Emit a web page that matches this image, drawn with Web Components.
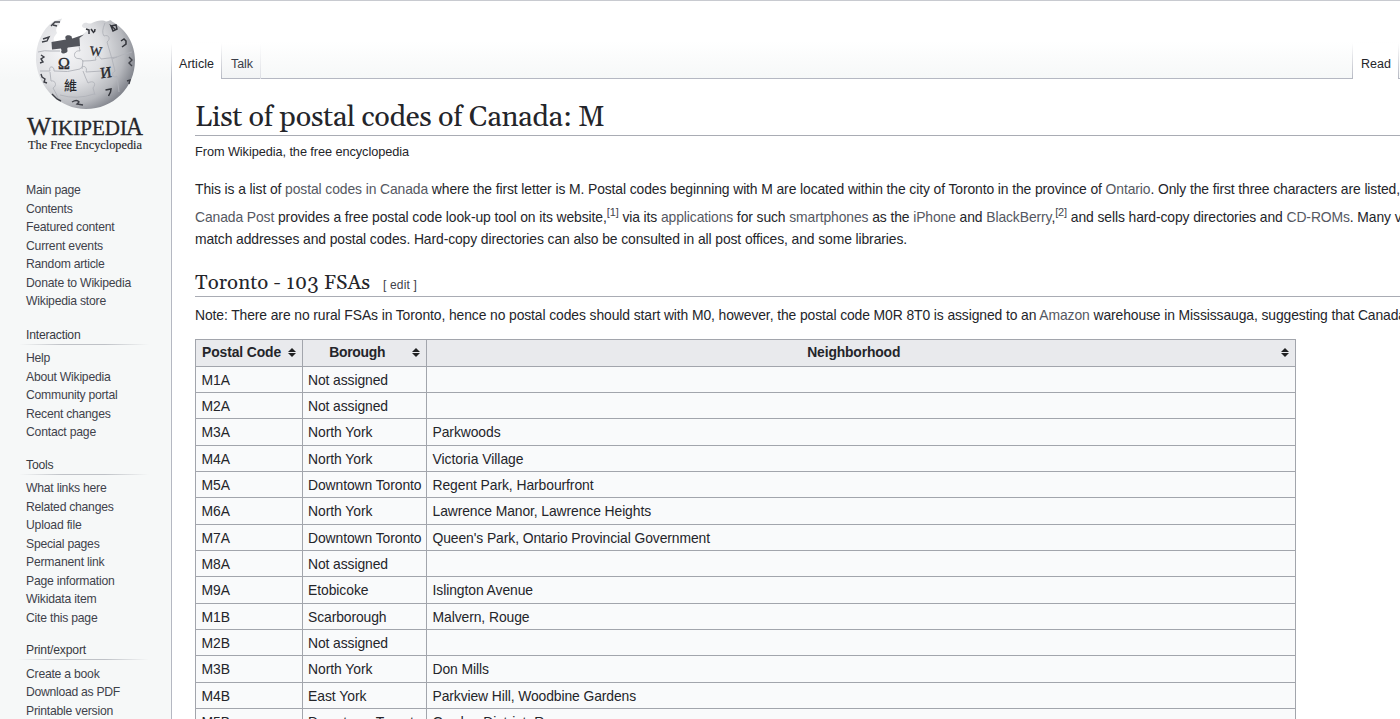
<!DOCTYPE html>
<html lang="en"><head><meta charset="utf-8"><title>List of postal codes of Canada: M</title>
<style>html,body{margin:0;height:719px;overflow:hidden;background:#fff}body{font-family:"Liberation Sans",Arial,sans-serif;color:#24252a}</style></head>
<body><wiki-page></wiki-page>
<script>
// One line of text, tracked so that it spans the width given by its "w" attribute.
customElements.define('text-line',class extends HTMLElement{
 connectedCallback(){
  this.attachShadow({mode:'open'}).innerHTML='<style>:host{display:inline-block;white-space:nowrap}</style><slot></slot>';
  const w=parseFloat(this.getAttribute('w'));
  if(w){const n=this.textContent.length,r=this.getBoundingClientRect().width;this.style.letterSpacing=((w-r)/n)+'px'}
 }});

customElements.define('wiki-logo',class extends HTMLElement{
 connectedCallback(){this.attachShadow({mode:'open'}).innerHTML=`
<style>:host{display:block;width:171px;height:160px}svg{display:block}text{font-family:"Liberation Serif",serif;fill:#26272b}</style>
<svg width="171" height="160" viewBox="0 0 171 160">
<defs><radialGradient id="g" cx=".3" cy=".36" r=".74"><stop offset="0" stop-color="#f6f6f8"/><stop offset=".5" stop-color="#dfe0e3"/><stop offset=".8" stop-color="#b6b8bd"/><stop offset="1" stop-color="#7f828a"/></radialGradient></defs>
<path d="M62 17.500L54 20C42 28 35.500 43 36 60C38 87 60 108 86 108C113 108 135 87 135 59C135 43 126 28 112 20.500C110 17 108 22 105 20C100 19 96 20 92 22C89 24 86 20 83 23C80 25 84 28 86 27L87 30L82 34L70 39L55 42C52 37 55 35 57 32C55 28 57 26 59 24Z" fill="url(#g)"/>
<path d="M51.500 41L66 38.500C64 35 67 33.500 70 34.500C73 35.500 71 37 72.500 37.500L84 33.500L79.500 37L80 45L68 46.500C66 48 69 50 66.500 51.500C63 53.500 60 52 61.500 49.500L61 47.500L52 48.500Z" fill="#53555c"/>
<g fill="none" stroke="#b0b2b9" stroke-width=".9"><path d="M38 51Q45 49 50 50L60 50M79 45L80 50C77 49 73 52 75 56C77 59 81 56 83 60L82 68M82 60Q91 60 96 59C94 55 99 53 101 58L117 56M40 70L50 70C48 64 55 65 54 70Q68 72 80 68C83 63 88 66 86 71L102 70M50 71L51 80C56 79 57 85 53 87Q56 92 58 97M83 70Q86 78 88 82C93 79 97 82 93 87L95 94M60 94Q77 99 94 93M105 22Q101 31 104 35C109 33 111 38 107 41L112 58L115 70C110 73 114 78 117 75L119 91M112 58Q123 53 132 51"/></g>
<g font-weight="bold"><text x="58" y="68" font-size="16" font-weight="400" stroke="#26272b" stroke-width=".4">Ω</text><text x="89.500" y="54" font-size="13" transform="rotate(5 89 54)" font-weight="400" stroke="#26272b" stroke-width=".3">W</text><text x="101" y="77.500" font-size="15.500" transform="rotate(-7 100 77)" font-weight="400" stroke="#26272b" stroke-width=".4">И</text><text x="64" y="89" font-size="13" style="font-family:'Noto Sans CJK SC',sans-serif;font-weight:500">維</text></g>
<g fill="none" stroke="#33353b" stroke-width="1.500"><path d="M105.500 89L111 88L110.500 91L108.500 95M86 28L89 29L89 33M91 28L94 32M95 28L94.500 31M121 40L124 38L126 40L126 43L122 46M111 25L116 24L117 28L113 30L111 25L115 28"/></g>
<g fill="none" stroke="#3e4047" stroke-width="1.400"><path d="M51 25L55 21L60 21M53 24L57 25M43 38L49 36L47 40L42 41M41 54L44 56L41 58L43 61L40 62M41 73L42 76L45 78L44 81L47 82M72 101Q77 98 79 101L77 103L83 104M129 56L132 59L129 62L132 65M127 80L130 79L129 83M52 93L57 98L61 100"/></g>
<g stroke="#26272b" stroke-width=".3"><text x="27" y="133.500" font-size="25" textLength="24" lengthAdjust="spacingAndGlyphs">W</text><text x="51" y="133.500" font-size="20" textLength="76" lengthAdjust="spacingAndGlyphs">IKIPEDI</text><text x="126" y="133.500" font-size="25" textLength="17" lengthAdjust="spacingAndGlyphs">A</text></g><text x="28" y="147.500" font-size="13.500" textLength="114" lengthAdjust="spacingAndGlyphs" stroke="#26272b" stroke-width=".15">The Free Encyclopedia</text>
</svg>`}});

customElements.define('side-portal',class extends HTMLElement{
 connectedCallback(){const h=this.getAttribute('heading');this.attachShadow({mode:'open'}).innerHTML=`
<style>:host{display:block;padding:0 0 13.900px 26px;font-size:12.200px;color:#3f424b}
h3{font:inherit;color:#383a42;margin:0;height:18px;line-height:18px}
.rule{height:1px;width:130px;margin:0 0 4.300px -7px;background:linear-gradient(90deg,transparent,#bfc2c7 33%,#bfc2c7 66%,transparent)}
div.i{height:18.560px;line-height:18.560px}</style>
${h?`<h3><text-line w="${this.getAttribute('w')}">${h}</text-line></h3><div class="rule"></div>`:''}${this.getAttribute('items').split('|').map(s=>{const[t,w]=s.split('~');return`<div class="i"><text-line w="${w}">${t}</text-line></div>`}).join('')}`}});

customElements.define('wiki-sidebar',class extends HTMLElement{
 connectedCallback(){this.attachShadow({mode:'open'}).innerHTML=`
<style>:host{display:block;width:171px;flex:none}wiki-logo{margin-bottom:20px}.first{padding-bottom:15px}</style>
<wiki-logo></wiki-logo>
<side-portal class="first" items="Main page~54.5|Contents~46.5|Featured content~88.5|Current events~77|Random article~78.5|Donate to Wikipedia~105|Wikipedia store~80"></side-portal>
<side-portal heading="Interaction" w="54.5" items="Help~24|About Wikipedia~84.5|Community portal~91.5|Recent changes~84.5|Contact page~70"></side-portal>
<side-portal heading="Tools" w="27.5" items="What links here~80.5|Related changes~87.5|Upload file~55.5|Special pages~73.5|Permanent link~78.5|Page information~88.5|Wikidata item~70.5|Cite this page~71.5"></side-portal>
<side-portal heading="Print/export" w="60" items="Create a book~73.5|Download as PDF~94|Printable version~87"></side-portal>`}});

customElements.define('wiki-tabs',class extends HTMLElement{
 connectedCallback(){this.attachShadow({mode:'open'}).innerHTML=`
<style>:host{display:flex;height:78px;box-sizing:border-box;align-items:flex-end;font-size:12.500px}
.t{height:36px;box-sizing:border-box;padding-top:14px;line-height:15px;color:#3b3e48}
.a{color:#24252a;background:#fff}
.s{width:1px;height:36px;background:linear-gradient(#fff,#b5b8c2)}
.s.l{background:linear-gradient(#fff,#dcdee3)}
.line{border-bottom:1px solid #b5b8c2}
.talk{width:38px;padding-left:9px;background:linear-gradient(#fff,#f2f4f5)}
.gap{flex:1}</style>
<div class="s"></div><div class="t a" style="width:49px;padding-left:7px"><text-line w="35">Article</text-line></div><div class="s"></div>
<div class="t talk line"><text-line w="22">Talk</text-line></div><div class="s l"></div><div class="t gap line"></div><div class="s"></div>
<div class="t a" style="width:45px;padding-left:8px"><text-line w="30">Read</text-line></div><div class="s"></div><div class="t line" style="width:1px"></div>`}});

const rows=[['M1A','Not assigned',''],['M2A','Not assigned',''],['M3A','North York','Parkwoods',68],['M4A','North York','Victoria Village',91],['M5A','Downtown Toronto','Regent Park, Harbourfront',161],['M6A','North York','Lawrence Manor, Lawrence Heights',218.5],['M7A','Downtown Toronto',"Queen's Park, Ontario Provincial Government",277.500],['M8A','Not assigned',''],['M9A','Etobicoke','Islington Avenue',100.5],['M1B','Scarborough','Malvern, Rouge',97],['M2B','Not assigned',''],['M3B','North York','Don Mills',56.5],['M4B','East York','Parkview Hill, Woodbine Gardens',203.5],['M5B','Downtown Toronto','Garden District, Ryerson',154]];
const bw={'Not assigned':80,'North York':64.5,'Downtown Toronto':113.5,'Etobicoke':60.5,'Scarborough':78.5,'East York':58.5};
customElements.define('sort-icon',class extends HTMLElement{
 connectedCallback(){this.attachShadow({mode:'open'}).innerHTML='<style>:host{display:block;width:8px;height:9px}svg{display:block}</style><svg width="8" height="9"><path d="M0 4L4 0L8 4ZM0 5H8L4 9Z" fill="#202122"/></svg>'}});
customElements.define('postal-table',class extends HTMLElement{
 connectedCallback(){this.attachShadow({mode:'open'}).innerHTML=`
<style>:host{display:grid;grid-template-columns:106.500px 124.500px 868.500px;grid-template-rows:26.600px repeat(14,26.330px);width:1099.500px;border-left:1px solid #a2a5ac;border-top:1px solid #a2a5ac;font-size:13.900px}
div{box-sizing:border-box;border-right:1px solid #a2a5ac;border-bottom:1px solid #a2a5ac;background:#f9fafb;padding-left:5.500px;line-height:26px;white-space:nowrap}
.h{background:#e9eaed;font-weight:bold;display:flex;align-items:center;padding:0 6px;line-height:25px}.h span{flex:1;text-align:center;padding-right:6px}</style>
<div class="h"><span style="text-align:left;padding:0"><text-line w="79">Postal Code</text-line></span><sort-icon></sort-icon></div><div class="h"><span><text-line w="56">Borough</text-line></span><sort-icon></sort-icon></div><div class="h"><span><text-line w="93">Neighborhood</text-line></span><sort-icon></sort-icon></div>
${rows.map(r=>`<div><text-line w="28.500">${r[0]}</text-line></div><div><text-line w="${bw[r[1]]}">${r[1]}</text-line></div><div>${r[2]?`<text-line w="${r[3]}">${r[2]}</text-line>`:''}</div>`).join('')}`}});

customElements.define('wiki-article',class extends HTMLElement{
 connectedCallback(){this.attachShadow({mode:'open'}).innerHTML=`
<style>:host{display:block;border-left:1px solid #b5b8c2;background:#fff;padding:18px 0 0 23px;height:640px;box-sizing:border-box;font-size:13.900px;overflow:hidden}
h1,h2{font-family:Georgia,Gelasio,"Liberation Serif",serif;font-weight:400;margin:0;border-bottom:1px solid #a9acb4;box-sizing:border-box}
h1{font-size:28.800px;height:39px;line-height:41px}
h2{font-size:20.400px;height:26px;line-height:25px;display:flex;gap:13px}
h2 small{font:12px/29px "Liberation Sans",sans-serif;color:#3f424b}
.sub{font-size:12.750px;line-height:16px;margin:7.500px 0 18.500px}
p{margin:0;line-height:22px;white-space:nowrap}
a{color:#555862}sup{font-size:11px;line-height:1;vertical-align:6px;color:#42454e}
postal-table{margin-top:13px}</style>
<h1><text-line w="409.500">List of postal codes of Canada: M</text-line></h1>
<div class="sub"><text-line w="214">From Wikipedia, the free encyclopedia</text-line></div>
<p><text-line w="1205">This is a list of <a>postal codes in Canada</a> where the first letter is M. Postal codes beginning with M are located within the city of Toronto in the province of <a>Ontario</a>. Only the first three characters are listed,</text-line></p>
<p style="margin-top:6px"><text-line w="1206.500"><a>Canada Post</a> provides a free postal code look-up tool on its website,<sup>[1]</sup> via its <a>applications</a> for such <a>smartphones</a> as the <a>iPhone</a> and <a>BlackBerry</a>,<sup>[2]</sup> and sells hard-copy directories and <a>CD-ROMs</a>. Many v</text-line></p>
<p><text-line w="712">match addresses and postal codes. Hard-copy directories can also be consulted in all post offices, and some libraries.</text-line></p>
<h2 style="margin-top:21px"><text-line w="175">Toronto - 103 FSAs</text-line><small><text-line w="34">[ edit ]</text-line></small></h2>
<p style="margin-top:7px"><text-line w="1211">Note: There are no rural FSAs in Toronto, hence no postal codes should start with M0, however, the postal code M0R 8T0 is assigned to an <a>Amazon</a> warehouse in Mississauga, suggesting that Canada</text-line></p>
<postal-table></postal-table>`}});

customElements.define('wiki-page',class extends HTMLElement{
 connectedCallback(){this.attachShadow({mode:'open'}).innerHTML=`
<style>:host{display:flex;width:1400px;height:719px;overflow:hidden;box-sizing:border-box;border-top:1px solid #c8cad0;background:linear-gradient(#fff 40px,#f6f8f8 78px)}
main{flex:1;min-width:0}</style>
<wiki-sidebar></wiki-sidebar><main><wiki-tabs></wiki-tabs><wiki-article></wiki-article></main>`}});
</script></body></html>
